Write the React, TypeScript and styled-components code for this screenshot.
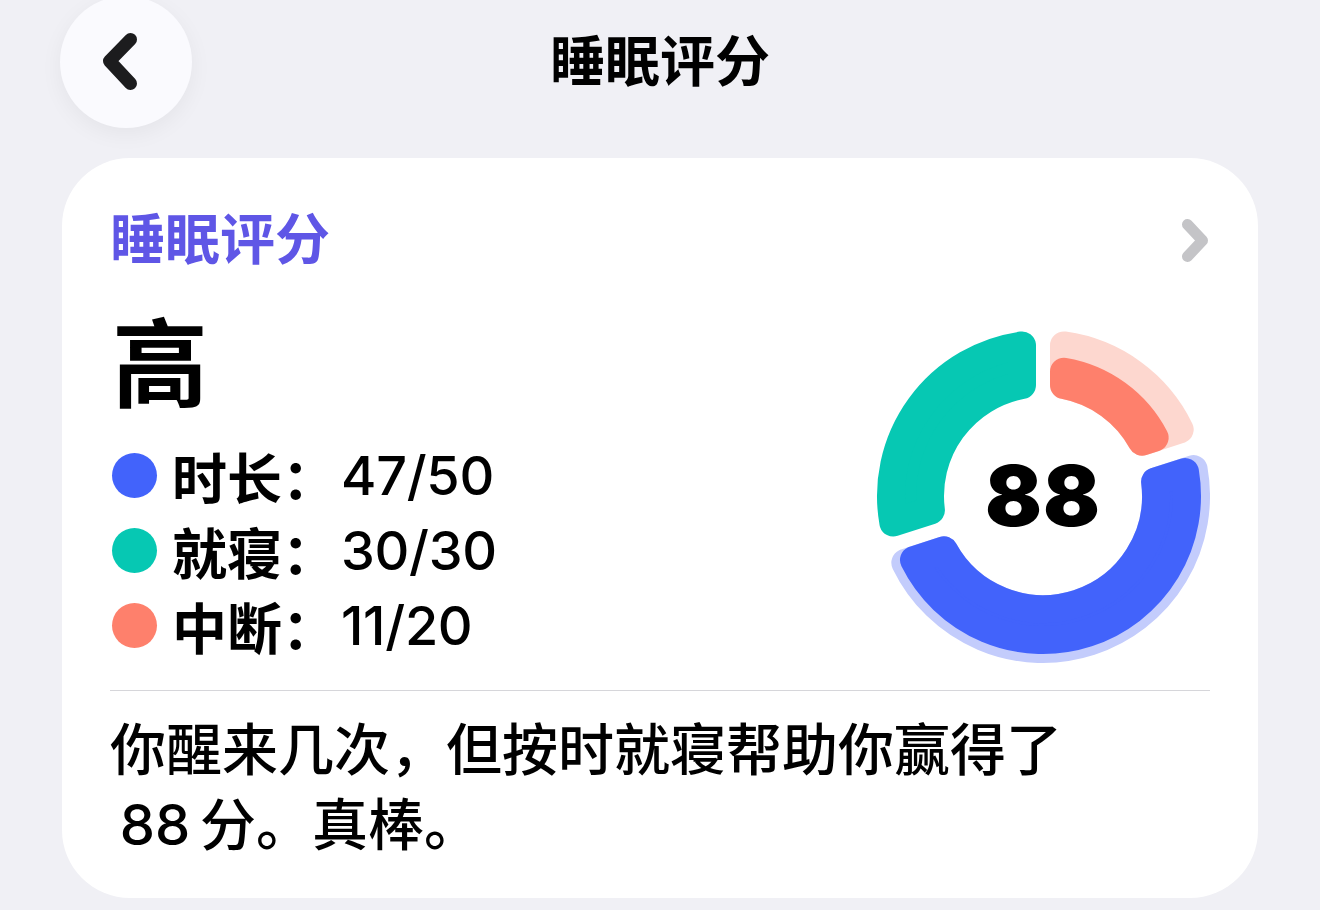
import React from "react";
import styled, { createGlobalStyle } from "styled-components";

const GlobalStyle = createGlobalStyle`
  html, body {
    margin: 0;
    padding: 0;
    background: #f0f0f5;
  }
  body {
    font-family: Inter, "Noto Sans CJK SC", sans-serif;
    color: #000;
    overflow: hidden;
  }
`;

const Page = styled.div`
  width: 1320px;
  height: 910px;
  background: #f0f0f5;
  overflow: hidden;
`;

const TopBar = styled.header`
  height: 128px;
  display: grid;
  grid-template-columns: 1fr auto 1fr;
  align-items: start;
`;

const BackButton = styled.button`
  width: 132px;
  height: 132px;
  margin: -4px 0 0 60px;
  border: none;
  border-radius: 50%;
  background: #fafafe;
  box-shadow: 0 6px 22px rgba(0, 0, 0, 0.05);
  padding: 0;
  display: block;
  justify-self: start;
  svg {
    display: block;
  }
`;

const PageTitle = styled.h1`
  margin: 24px 0 0;
  font-family: "Noto Sans CJK SC", sans-serif;
  font-size: 55px;
  font-weight: 700;
  line-height: 66px;
  color: #000;
`;

const Card = styled.section`
  margin: 30px 62px 0;
  background: #fff;
  border-radius: 68px;
  padding: 49px 48px 35px 48px;
`;

const CardHeader = styled.div`
  height: 66px;
  display: flex;
  align-items: center;
  justify-content: space-between;
`;

const CardTitle = styled.h2`
  margin: 0;
  padding-bottom: 10px;
  font-family: "Noto Sans CJK SC", sans-serif;
  font-size: 55px;
  font-weight: 700;
  line-height: 56px;
  color: #5f56e6;
`;

const MainRow = styled.div`
  margin-top: 33px;
  display: flex;
  align-items: flex-end;
  justify-content: space-between;
`;

const LeftCol = styled.div`
  display: flex;
  flex-direction: column;
`;

const Grade = styled.div`
  font-family: "Noto Sans CJK SC", sans-serif;
  font-size: 96px;
  font-weight: 700;
  line-height: 104px;
  padding: 0 0 16px 2px;
`;

const Legend = styled.ul`
  list-style: none;
  margin: 12px 0 0;
  padding: 0;
`;

const LegendRow = styled.li`
  height: 75px;
  display: flex;
  align-items: center;
  padding-left: 2px;
`;

const Dot = styled.span<{ $color: string }>`
  width: 45px;
  height: 45px;
  border-radius: 50%;
  background: ${(p) => p.$color};
  margin-right: 15px;
  flex: none;
`;

const Label = styled.span`
  font-family: "Noto Sans CJK SC", sans-serif;
  font-size: 55px;
  font-weight: 700;
  line-height: 75px;
  width: 169px;
`;

const Value = styled.span`
  font-family: Inter, sans-serif;
  font-size: 54px;
  font-weight: 500;
  line-height: 75px;
  letter-spacing: -0.3px;
`;

const ChartWrap = styled.div`
  width: 334px;
  height: 334px;
  display: grid;
  place-items: center;
  > * {
    grid-area: 1 / 1;
  }
  svg {
    display: block;
  }
`;

const Score = styled.div`
  font-family: Inter, sans-serif;
  font-size: 84px;
  font-weight: 900;
  line-height: 1;
  letter-spacing: 1px;
  color: #000;
`;

const Divider = styled.hr`
  margin: 27px 0 0;
  border: none;
  height: 1px;
  background: #d6d6da;
`;

const Summary = styled.p`
  margin: 22px 0 0;
  font-family: Inter, "Noto Sans CJK SC", sans-serif;
  font-size: 56px;
  font-weight: 500;
  line-height: 75px;
  color: #000;
`;

const CX = 167;
const CY = 167;

function pt(r: number, deg: number): string {
  const a = (deg * Math.PI) / 180;
  return `${(CX + r * Math.sin(a)).toFixed(2)} ${(CY - r * Math.cos(a)).toFixed(2)}`;
}

function segmentPath(a0: number, a1: number, r0: number, r1: number, gap: number, cr: number): string {
  const R0 = r0 + cr;
  const R1 = r1 - cr;
  const d = gap + cr;
  const off = (rho: number) => (Math.asin(d / rho) * 180) / Math.PI;
  const o0 = a0 + off(R1);
  const o1 = a1 - off(R1);
  const i0 = a0 + off(R0);
  const i1 = a1 - off(R0);
  const lo = o1 - o0 > 180 ? 1 : 0;
  const li = i1 - i0 > 180 ? 1 : 0;
  return `M ${pt(R1, o0)} A ${R1} ${R1} 0 ${lo} 1 ${pt(R1, o1)} L ${pt(R0, i1)} A ${R0} ${R0} 0 ${li} 0 ${pt(R0, i0)} Z`;
}

type Seg = { a0: number; a1: number; r0: number; r1: number; color: string };

const CR = 14;
const GAP = 7;

const segments: Seg[] = [
  { a0: 0, a1: 72, r0: 99, r1: 166, color: "#fdd7cf" },
  { a0: 0, a1: 72, r0: 99, r1: 140, color: "#fe806c" },
  { a0: 72, a1: 252, r0: 99, r1: 167, color: "#c3ccfc" },
  { a0: 72, a1: 252, r0: 99, r1: 158, color: "#4263fb" },
  { a0: 252, a1: 360, r0: 99, r1: 166, color: "#06c8b3" },
];

function Donut() {
  return (
    <svg width="334" height="334" viewBox="0 0 334 334">
      {segments.map((s, i) => {
        const d = segmentPath(s.a0, s.a1, s.r0, s.r1, GAP, CR);
        return (
          <path
            key={i}
            d={d}
            fill={s.color}
            stroke={s.color}
            strokeWidth={CR * 2}
            strokeLinejoin="round"
          />
        );
      })}
    </svg>
  );
}

const legend = [
  { color: "#4263fb", label: "时长：", value: "47/50" },
  { color: "#06c8b3", label: "就寝：", value: "30/30" },
  { color: "#fe806c", label: "中断：", value: "11/20" },
];

export default function App() {
  return (
    <Page>
      <GlobalStyle />
      <TopBar>
        <BackButton aria-label="返回">
          <svg width="132" height="132" viewBox="0 0 132 132">
            <path
              d="M70.5 43.5 L49.5 65 L70.5 87.5"
              fill="none"
              stroke="#1c1c1e"
              strokeWidth="13"
              strokeLinecap="round"
              strokeLinejoin="round"
            />
          </svg>
        </BackButton>
        <PageTitle>睡眠评分</PageTitle>
        <div />
      </TopBar>
      <Card>
        <CardHeader>
          <CardTitle>睡眠评分</CardTitle>
          <svg width="30" height="50" viewBox="0 0 30 50">
            <path
              d="M7.5 9.5 L22.5 25.5 L7.5 41.5"
              fill="none"
              stroke="#c4c4c7"
              strokeWidth="11"
              strokeLinecap="round"
              strokeLinejoin="round"
            />
          </svg>
        </CardHeader>
        <MainRow>
          <LeftCol>
            <Grade>高</Grade>
            <Legend>
              {legend.map((l) => (
                <LegendRow key={l.label}>
                  <Dot $color={l.color} />
                  <Label>{l.label}</Label>
                  <Value>{l.value}</Value>
                </LegendRow>
              ))}
            </Legend>
          </LeftCol>
          <ChartWrap>
            <Donut />
            <Score>88</Score>
          </ChartWrap>
        </MainRow>
        <Divider />
        <Summary>
          你醒来几次，但按时就寝帮助你赢得了
          <br />
          {"\u200988\u2009分。真棒。"}
        </Summary>
      </Card>
    </Page>
  );
}
